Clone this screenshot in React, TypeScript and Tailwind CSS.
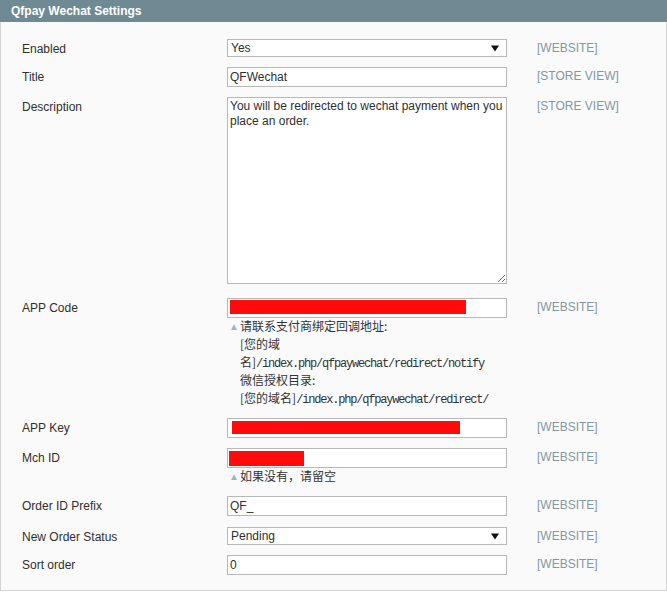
import React from 'react';

type Scope = 'WEBSITE' | 'STORE VIEW';

function Caret() {
  return (
    <svg width="8" height="7" viewBox="0 0 8 7" className="shrink-0">
      <path d="M0 0.5h8L4 6.5z" fill="#111" />
    </svg>
  );
}

function SelectBox({ value }: { value: string }) {
  return (
    <div className="flex h-[18px] w-[280px] items-center justify-between border border-[#b8b8b8] bg-white pl-[3px] pr-[7px]">
      <span className="leading-none">{value}</span>
      <Caret />
    </div>
  );
}

function TextBox({ value, redact }: { value?: string; redact?: { left: number; width: number; top: number; height: number } }) {
  return (
    <div className="relative flex h-[20px] w-[280px] items-center border border-[#b8b8b8] bg-white px-[2px]">
      {value && <span className="leading-none">{value}</span>}
      {redact && (
        <div
          className="absolute bg-[#ff0b0b]"
          style={{ left: redact.left, width: redact.width, top: redact.top, height: redact.height }}
        />
      )}
    </div>
  );
}

function NoteLine({ children }: { children: React.ReactNode }) {
  return <div className="h-[18px] overflow-visible whitespace-nowrap leading-[18px]">{children}</div>;
}

function Note({ children }: { children: React.ReactNode }) {
  return (
    <div className="-mt-[1px] flex w-[280px] text-[12px] leading-[18px] text-[#333]">
      <span className="mt-[1px] h-[18px] w-[13px] shrink-0 pl-[2px] text-[10px] text-[#a3b3bc]">▲</span>
      <div className="font-['Noto_Sans_CJK_SC',sans-serif]">{children}</div>
    </div>
  );
}

function Mono({ children }: { children: React.ReactNode }) {
  return <span className="font-['Liberation_Mono',monospace] tracking-[-1.2px]">{children}</span>;
}

function Row({
  label,
  scope,
  children,
  className = 'mb-[10px]',
}: {
  label: string;
  scope: Scope;
  children: React.ReactNode;
  className?: string;
}) {
  return (
    <div className={`flex ${className}`}>
      <div className="w-[205px] shrink-0 pt-[2px] leading-[16px]">{label}</div>
      <div className="w-[280px] shrink-0">{children}</div>
      <div className="ml-[30px] pt-[1px] leading-[16px] text-[#8597a1]">[{scope}]</div>
    </div>
  );
}

export default function App() {
  return (
    <div className="w-[667px] bg-white font-['Liberation_Sans',Arial,sans-serif] text-[12px] text-[#2f2f2f]">
      <div className="flex h-[22px] items-center bg-[#6f8a93] pl-[11px] font-bold text-white">
        Qfpay Wechat Settings
      </div>
      <div className="h-[569px] border-x border-b border-[#d3d3d3] bg-[#fafafa] pl-[21px] pt-[17px]">
        <Row label="Enabled" scope="WEBSITE">
          <SelectBox value="Yes" />
        </Row>
        <Row label="Title" scope="STORE VIEW">
          <TextBox value="QFWechat" />
        </Row>
        <Row label="Description" scope="STORE VIEW" className="mb-[14px]">
          <textarea
            readOnly
            value="You will be redirected to wechat payment when you place an order."
            className="block h-[187px] w-[280px] border border-[#b8b8b8] bg-white px-[2px] py-[1px] leading-[15px] outline-none"
          />
        </Row>
        <Row label="APP Code" scope="WEBSITE" className="mb-[11px]">
          <TextBox redact={{ left: 2, width: 236, top: 1, height: 14 }} />
          <Note>
            <NoteLine>请联系支付商绑定回调地址:</NoteLine>
            <NoteLine>[您的域</NoteLine>
            <NoteLine>
              名]<Mono>/index.php/qfpaywechat/redirect/notify</Mono>
            </NoteLine>
            <NoteLine>微信授权目录:</NoteLine>
            <NoteLine>
              [您的域名]<Mono>/index.php/qfpaywechat/redirect/</Mono>
            </NoteLine>
          </Note>
        </Row>
        <Row label="APP Key" scope="WEBSITE">
          <TextBox redact={{ left: 4, width: 228, top: 2, height: 13 }} />
        </Row>
        <Row label="Mch ID" scope="WEBSITE" className="mb-[10px]">
          <TextBox redact={{ left: 1, width: 75, top: 2, height: 15 }} />
          <Note>
            <NoteLine>如果没有，请留空</NoteLine>
          </Note>
        </Row>
        <Row label="Order ID Prefix" scope="WEBSITE" className="mb-[11px]">
          <TextBox value="QF_" />
        </Row>
        <Row label="New Order Status" scope="WEBSITE">
          <SelectBox value="Pending" />
        </Row>
        <Row label="Sort order" scope="WEBSITE">
          <TextBox value="0" />
        </Row>
      </div>
    </div>
  );
}
